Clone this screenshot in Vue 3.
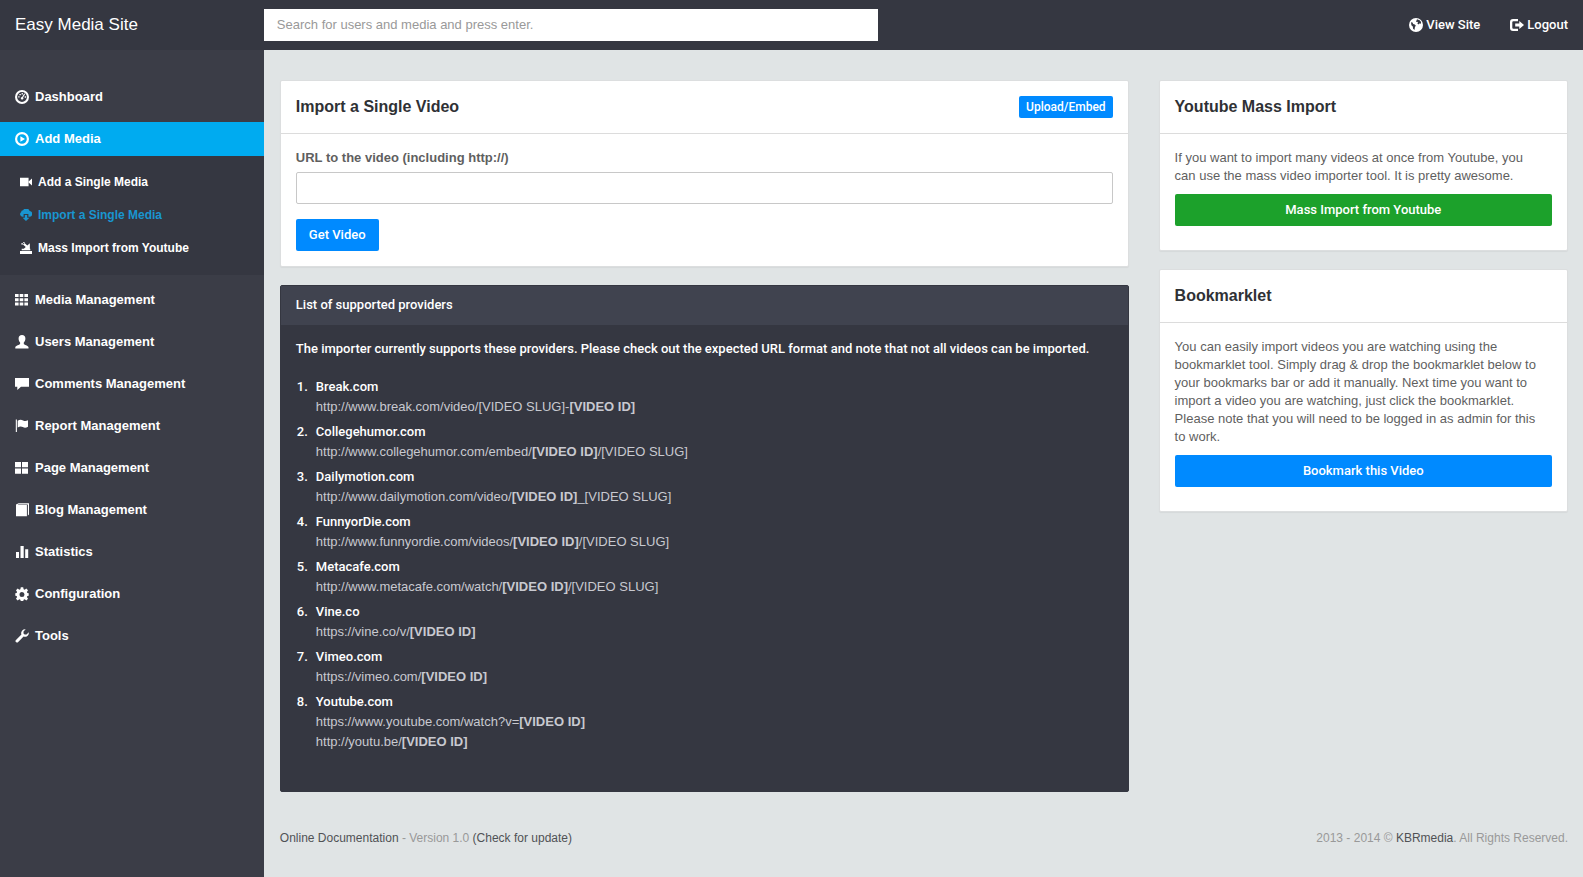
<script setup>
const before = [
  { label: 'Dashboard', icon: 'dashboard' },
  { label: 'Add Media', icon: 'play', active: true },
]
const submenu = [
  { label: 'Add a Single Media', icon: 'video' },
  { label: 'Import a Single Media', icon: 'cloud', active: true },
  { label: 'Mass Import from Youtube', icon: 'import' },
]
const after = [
  { label: 'Media Management', icon: 'grid' },
  { label: 'Users Management', icon: 'user' },
  { label: 'Comments Management', icon: 'comment' },
  { label: 'Report Management', icon: 'flag' },
  { label: 'Page Management', icon: 'large' },
  { label: 'Blog Management', icon: 'book' },
  { label: 'Statistics', icon: 'stats' },
  { label: 'Configuration', icon: 'cog' },
  { label: 'Tools', icon: 'wrench' },
]
const id = '[VIDEO ID]'
const slug = '[VIDEO SLUG]'
const providers = [
  { name: 'Break.com', urls: [['http://www.break.com/video/' + slug + '-', id, '']] },
  { name: 'Collegehumor.com', urls: [['http://www.collegehumor.com/embed/', id, '/' + slug]] },
  { name: 'Dailymotion.com', urls: [['http://www.dailymotion.com/video/', id, '_' + slug]] },
  { name: 'FunnyorDie.com', urls: [['http://www.funnyordie.com/videos/', id, '/' + slug]] },
  { name: 'Metacafe.com', urls: [['http://www.metacafe.com/watch/', id, '/' + slug]] },
  { name: 'Vine.co', urls: [['https://vine.co/v/', id, '']] },
  { name: 'Vimeo.com', urls: [['https://vimeo.com/', id, '']] },
  { name: 'Youtube.com', urls: [['https://www.youtube.com/watch?v=', id, ''], ['http://youtu.be/', id, '']] },
]
const icons = {
  dashboard: 'M7 0a7 7 0 1 0 0 14A7 7 0 0 0 7 0zm0 2.1a4.9 4.9 0 1 1 0 9.8 4.9 4.9 0 0 1 0-9.8zM3.2 6.2h1.4v1.4H3.2zM4.4 3.9h1.4v1.4H4.4zM6.6 3h1.3v1.4H6.6zM9.7 6.3h1.3v1.4H9.7zM9.2 3.4l1 .7-2.1 3.3a1.3 1.3 0 1 1-1-.5z',
  play: 'M7 0a7 7 0 1 0 0 14A7 7 0 0 0 7 0zm0 2.2a4.8 4.8 0 1 1 0 9.6 4.8 4.8 0 0 1 0-9.6zM5.4 4.2v5.6l4.6-2.8z',
  video: 'M0 2h10v10H0zM10.3 6.2 14 3v8l-3.7-3.2z',
  cloud: 'M3 9A3 3 0 0 1 1.200 3.700 2.500 2.500 0 0 1 3.600 1.500 4.200 4.200 0 0 1 11.200 2.300 3.400 3.400 0 0 1 11.600 9H9.800V5.800H4.200V9zM5.600 7h2.800v3.300h2.600L7 14 3 10.300h2.600z',
  import: 'M0 10.500h14V14H0zM2 8h10v1.500H2zM11.500 1.500V8H4.500L6.700 5.800 3.500 3 5.200 1.300 8.500 4.200zM1.500 1.500h2v1.500h-2zM3.500 0h2v1h-2z',
  grid: 'M0 1h3.600v3H0zM4.700 1h3.600v3H4.700zM9.400 1H13v3H9.400zM0 5.300h3.600v3H0zM4.700 5.300h3.600v3H4.700zM9.400 5.300H13v3H9.400zM0 9.600h3.600v3H0zM4.700 9.600h3.600v3H4.700zM9.400 9.600H13v3H9.400z',
  user: 'M7 0c2.200 0 3.400 1.500 3.400 3.500 0 1.600-.7 3-1.600 3.900v1.500c0 .8 4.700 1.500 4.700 3.400V13.500H.3V12.300c0-1.900 4.800-2.600 4.800-3.400V7.400C4.200 6.500 3.600 5.100 3.600 3.500 3.600 1.500 4.800 0 7 0z',
  comment: 'M0 1h14v8.800H6L2.300 13V9.800H0z',
  flag: 'M.8.5h1.100V13H.8zM2.700 1.800c2-1.500 3.700-1.300 5.400-.3 1.600.8 3 .8 4.900-.2v6.500c-2 1.200-3.500 1.200-5.200.3C6.300 7.200 4.700 7.200 2.700 8.600z',
  large: 'M0 1h6v5.300H0zM7 1h6v5.300H7zM0 7.500h6v5.300H0zM7 7.500h6v5.300H7z',
  book: 'M1 1.500 3.600.2H14V11.500l-1.100 1V1.500H3.500L2.600 2h9.300v11.300H1z',
  stats: 'M1 7h3v6H1zM5.500 1h3.200v12H5.500zM10.200 4.300h3v8.700h-3z',
  cog: 'M5.800.3h2.400l.4 1.900 1.100.5 1.600-1.100 1.700 1.700-1.100 1.600.5 1.100 1.300.2v2.600l-1.300.2-.5 1.100 1.100 1.600-1.700 1.700-1.600-1.100-1.100.5-.4 1.500H5.800l-.4-1.500-1.100-.5-1.600 1.100L1 11.700l1.100-1.600L1.600 9 .3 8.800V6.200L1.600 6l.5-1.100L1 3.300l1.700-1.700 1.600 1.100 1.100-.5zM7 4.900a2.500 2.500 0 1 0 0 5 2.500 2.500 0 0 0 0-5z',
  wrench: 'M13.800 3.300A4 4 0 0 1 8.600 7.600L3.200 13a1.500 1.500 0 0 1-2.500-.2 1.500 1.500 0 0 1 .3-1.900L6.400 5.500A4 4 0 0 1 10.700.2L8.500 2.500v1.900l1.100 1.100h1.900z',
  globe: 'M7 0a7 7 0 1 0 0 14A7 7 0 0 0 7 0zM8 1.300l2.600.9 1.500 1.900-.3 1.700-1.500-.3-.8.9-1.100-.8L9 4.300 8.200 3.700 7 4.100l.4-1.300zM2 4.300l1.500.2.7 1.400 1.600.5 1 1.200-.9 1.700-.4 2.600-1.400-1.200-.3-2.300-1.400-1.200z',
  logout: 'M8 1H3A3 3 0 0 0 0 4v6a3 3 0 0 0 3 3h5v-2.200H3.300a1 1 0 0 1-1-1V4.200a1 1 0 0 1 1-1H8zM9.300 3 14 7 9.300 11V8.600H5.200V5.400h4.100z',
}
</script>

<template>
  <div class="app">
    <header class="topbar">
      <a class="brand" href="#">Easy Media Site</a>
      <input class="search" type="text" aria-label="Search" placeholder="Search for users and media and press enter." />
      <nav class="toplinks">
        <a href="#"><svg class="icon" viewBox="0 0 14 14"><path :d="icons.globe" /></svg>View Site</a>
        <a href="#"><svg class="icon" viewBox="0 0 14 14"><path :d="icons.logout" /></svg>Logout</a>
      </nav>
    </header>

    <div class="body">
      <nav class="sidebar">
        <a v-for="i in before" :key="i.label" href="#" class="item" :class="{ active: i.active }">
          <svg class="icon" viewBox="0 0 14 14"><path :d="icons[i.icon]" /></svg>{{ i.label }}
        </a>
        <div class="submenu">
          <a v-for="i in submenu" :key="i.label" href="#" class="subitem" :class="{ current: i.active }">
            <svg class="icon" viewBox="0 0 14 14"><path :d="icons[i.icon]" /></svg>{{ i.label }}
          </a>
        </div>
        <a v-for="i in after" :key="i.label" href="#" class="item">
          <svg class="icon" viewBox="0 0 14 14"><path :d="icons[i.icon]" /></svg>{{ i.label }}
        </a>
      </nav>

      <div class="content">
        <div class="columns">
          <main class="col main">
            <section class="card">
              <div class="card-head">
                <h2>Import a Single Video</h2>
                <a class="btn small" href="#">Upload/Embed</a>
              </div>
              <form class="card-body form" @submit.prevent>
                <label for="url">URL to the video (including http://)</label>
                <input id="url" class="field" type="text" />
                <button class="btn" type="submit">Get Video</button>
              </form>
            </section>

            <section class="panel">
              <h3>List of supported providers</h3>
              <div class="panel-body">
                <p>The importer currently supports these providers. Please check out the expected URL format and note that not all videos can be imported.</p>
                <ol>
                  <li v-for="(p, n) in providers" :key="p.name">
                    <span class="num">{{ n + 1 }}.</span>
                    <div>
                      <div class="name">{{ p.name }}</div>
                      <div v-for="u in p.urls" :key="u[0]" class="url">{{ u[0] }}<strong>{{ u[1] }}</strong>{{ u[2] }}</div>
                    </div>
                  </li>
                </ol>
              </div>
            </section>
          </main>

          <aside class="col side">
            <section class="card">
              <div class="card-head"><h2>Youtube Mass Import</h2></div>
              <div class="card-body">
                <p>If you want to import many videos at once from Youtube, you can use the mass video importer tool. It is pretty awesome.</p>
                <a class="btn block green" href="#">Mass Import from Youtube</a>
              </div>
            </section>
            <section class="card">
              <div class="card-head"><h2>Bookmarklet</h2></div>
              <div class="card-body">
                <p>You can easily import videos you are watching using the bookmarklet tool. Simply drag &amp; drop the bookmarklet below to your bookmarks bar or add it manually. Next time you want to import a video you are watching, just click the bookmarklet. Please note that you will need to be logged in as admin for this to work.</p>
                <a class="btn block" href="#">Bookmark this Video</a>
              </div>
            </section>
          </aside>
        </div>

        <footer class="footer">
          <div><a href="#">Online Documentation</a> - Version 1.0 <a href="#">(Check for update)</a></div>
          <div>2013 - 2014 © <a href="#">KBRmedia</a>. All Rights Reserved.</div>
        </footer>
      </div>
    </div>
  </div>
</template>

<style>
body {
  margin: 0;
  background: #e0e4e5;
}
</style>

<style scoped>
.app,
.app * {
  box-sizing: border-box;
}
.app {
  display: flex;
  flex-direction: column;
  min-height: 100vh;
  font: 13px/18px 'Liberation Sans', Arial, sans-serif;
  color: #5f5f5f;
}
a {
  color: inherit;
  text-decoration: none;
}
h2,
h3,
p,
ol {
  margin: 0;
  padding: 0;
}
.icon {
  width: 14px;
  height: 14px;
  flex: none;
  fill: currentColor;
  fill-rule: evenodd;
}
.topbar {
  display: flex;
  align-items: center;
  height: 50px;
  background: #353741;
  color: #fff;
}
.brand {
  width: 16.6667%;
  padding-left: 15px;
  font-size: 17px;
}
.search {
  width: 38.8%;
  height: 32px;
  padding: 0 13px 2px;
  border: 0;
  background: #fff;
  font: inherit;
  color: #555;
}
.search::placeholder {
  color: #999;
  opacity: 1;
}
.toplinks {
  display: flex;
  gap: 30px;
  margin-left: auto;
  padding-right: 15px;
  font-family: Roboto, sans-serif;
  font-weight: 500;
}
.toplinks a {
  display: flex;
  align-items: center;
  gap: 3px;
}
.body {
  display: flex;
  flex: 1;
}
.sidebar {
  width: 16.6667%;
  padding-top: 30px;
  background: #3b3d47;
  color: #fff;
  font-weight: 700;
}
.item {
  display: flex;
  align-items: center;
  gap: 6px;
  height: 34px;
  margin-bottom: 8px;
  padding: 0 15px;
}
.item.active {
  margin-bottom: 0;
  background: #00abf0;
}
.submenu {
  margin-bottom: 8px;
  padding: 9px 0 11px;
  background: #353741;
}
.subitem {
  display: flex;
  align-items: center;
  gap: 6px;
  height: 33px;
  padding: 0 20px;
  font-size: 12px;
}
.subitem .icon {
  width: 12px;
  height: 12px;
}
.subitem.current {
  color: #1995d0;
}
.content {
  display: flex;
  flex-direction: column;
  flex: 1;
  padding-left: 1px;
}
.columns {
  display: flex;
  padding-top: 30px;
}
.col {
  padding: 0 15px;
}
.main {
  width: 66.6667%;
}
.side {
  width: 33.3333%;
}
.card {
  margin-bottom: 18px;
  border: 1px solid #dcdedf;
  border-radius: 2px;
  background: #fff;
  box-shadow: 0 1px 1px rgba(0, 0, 0, 0.05);
}
.card-head {
  display: flex;
  align-items: center;
  justify-content: space-between;
  height: 53px;
  padding: 0 15px;
  border-bottom: 1px solid #dcdcdc;
}
.card-head h2 {
  color: #2f3135;
  font-size: 16px;
  font-weight: 700;
}
.card-body {
  padding: 15px 15px 24px;
}
.card-body p {
  margin-bottom: 9px;
  padding-right: 10px;
}
.form {
  display: flex;
  flex-direction: column;
  align-items: flex-start;
  padding-bottom: 15px;
}
.form label {
  margin-bottom: 5px;
  font-weight: 700;
}
.field {
  width: 100%;
  height: 32px;
  margin-bottom: 15px;
  padding: 0 12px;
  border: 1px solid #c8c8c8;
  border-radius: 2px;
  font: inherit;
}
.btn {
  padding: 7px 13px;
  border: 0;
  border-radius: 2px;
  background: #008aff;
  color: #fff;
  font: 500 13px/18px Roboto, sans-serif;
}
.btn.small {
  padding: 2px 7px;
  font-size: 12px;
}
.btn.block {
  display: block;
  text-align: center;
}
.btn.green {
  background: #1ca12b;
}
.panel {
  border: 1px solid #353741;
  border-radius: 2px;
  background: #353741;
  color: #fff;
  font-family: Roboto, sans-serif;
  font-weight: 500;
}
.panel h3 {
  padding: 10px 15px 11px;
  background: #40434f;
  font-size: 13px;
  line-height: 18px;
  font-weight: 500;
}
.panel-body {
  padding: 15px 15px 39px;
}
.panel-body p {
  margin-bottom: 19px;
}
ol {
  list-style: none;
  line-height: 20px;
}
li {
  display: flex;
  margin-bottom: 5px;
}
li:last-child {
  margin-bottom: 0;
}
.num {
  width: 20px;
  padding-left: 1px;
}
.url {
  color: #c8c9d0;
  font-family: 'Liberation Sans', Arial, sans-serif;
  font-weight: 400;
}
.url strong {
  font-weight: 700;
}
.footer {
  display: flex;
  justify-content: space-between;
  padding: 37px 15px 30px;
  color: #999;
  font-size: 12px;
}
.footer a {
  color: #505255;
}
</style>
